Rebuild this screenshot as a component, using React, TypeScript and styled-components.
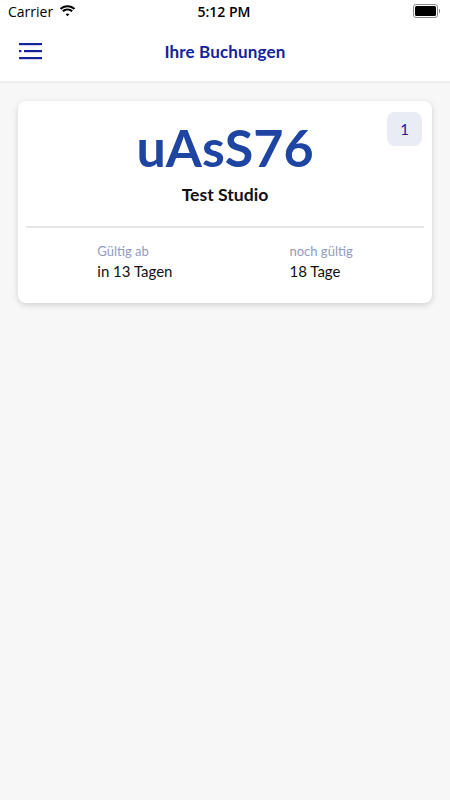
import styled, { createGlobalStyle } from 'styled-components';

const GlobalStyle = createGlobalStyle`
	html, body {
		margin: 0;
		padding: 0;
		background-color: #F7F7F7;
		font-family: Lato, "Open Sans", sans-serif;
	}
`

const StatusBar = () => {
	return (
		<StatusRow>
			<Carrier>
				Carrier
				<svg width="17" height="12" viewBox="0 0 17 12">
					<path d="M8.5 2.2c2.4 0 4.6.9 6.3 2.5l1.4-1.5C14.2 1.3 11.5.2 8.5.2S2.8 1.3.8 3.2l1.4 1.5C3.9 3.1 6.1 2.2 8.5 2.2z" fill="#000" />
					<path d="M8.5 5.4c1.5 0 2.9.6 4 1.6l1.4-1.5C12.5 4.2 10.6 3.4 8.5 3.4S4.5 4.2 3.1 5.5L4.5 7c1.1-1 2.5-1.6 4-1.6z" fill="#000" />
					<path d="M8.5 8.6c.7 0 1.3.3 1.8.7L8.5 11.3 6.7 9.3c.5-.4 1.1-.7 1.8-.7z" fill="#000" />
				</svg>
			</Carrier>
			<Time>5:12 PM</Time>
			<Battery>
				<BatteryBody>
					<BatteryLevel />
				</BatteryBody>
				<BatteryTip />
			</Battery>
		</StatusRow>
	)
}

const MenuIcon = () => (
	<svg width="24" height="18" viewBox="0 0 24 18">
		<rect x="0" y="0" width="23" height="2.2" fill="#12239B" />
		<rect x="0" y="7" width="2.4" height="2.2" fill="#12239B" />
		<rect x="5" y="7" width="18" height="2.2" fill="#12239B" />
		<rect x="0" y="14" width="23" height="2.2" fill="#12239B" />
	</svg>
)

const App = () => {
	return (
		<Page>
			<GlobalStyle />
			<Header>
				<StatusBar />
				<NavBar>
					<MenuButton><MenuIcon /></MenuButton>
					<NavTitle>Ihre Buchungen</NavTitle>
				</NavBar>
			</Header>
			<Content>
				<BookingCard>
					<Badge>1</Badge>
					<Code>uAsS76</Code>
					<Studio>Test Studio</Studio>
					<Divider />
					<Meta>
						<MetaItem>
							<MetaLabel>Gültig ab</MetaLabel>
							<MetaValue>in 13 Tagen</MetaValue>
						</MetaItem>
						<MetaItem>
							<MetaLabel>noch gültig</MetaLabel>
							<MetaValue>18 Tage</MetaValue>
						</MetaItem>
					</Meta>
				</BookingCard>
			</Content>
		</Page>
	)
}

const Page = styled.div`
	min-height: 800px;
	background-color: #F7F7F7;
`

const Header = styled.div`
	background-color: #FFF;
	border-bottom: 2px solid #EDEDED;
`

const StatusRow = styled.div`
	height: 22px;
	display: flex;
	align-items: center;
	justify-content: space-between;
	padding: 0 10px 0 8px;
	font-family: "Open Sans", "Liberation Sans", sans-serif;
	font-size: 14px;
	color: #000;
`

const Carrier = styled.div`
	display: flex;
	align-items: center;
	gap: 6px;
	width: 90px;
`

const Time = styled.div`
	font-weight: 600;
`

const Battery = styled.div`
	width: 90px;
	display: flex;
	justify-content: flex-end;
	align-items: center;
	gap: 1px;
`

const BatteryBody = styled.div`
	width: 21px;
	height: 10px;
	border: 1px solid #8A8A8A;
	border-radius: 3px;
	padding: 1px;
`

const BatteryLevel = styled.div`
	width: 100%;
	height: 100%;
	background-color: #000;
	border-radius: 1.5px;
`

const BatteryTip = styled.div`
	width: 1.5px;
	height: 4px;
	background-color: #8A8A8A;
	border-radius: 0 1px 1px 0;
`

const NavBar = styled.div`
	height: 59px;
	display: flex;
	align-items: center;
	justify-content: center;
	position: relative;
`

const MenuButton = styled.div`
	position: absolute;
	left: 19px;
	top: 21px;
	display: flex;
`

const NavTitle = styled.div`
	color: #12239B;
	font-size: 17px;
	font-weight: 700;
	letter-spacing: 0.15px;
`

const Content = styled.div`
	padding: 18px 18px;
`

const BookingCard = styled.div`
	position: relative;
	background-color: #FFF;
	border-radius: 8px;
	box-shadow: rgba(0, 0, 0, 0.16) 0px 2px 6px 0px;
	padding: 15px 8px 23px;
	display: flex;
	flex-direction: column;
	align-items: center;
`

const Badge = styled.div`
	position: absolute;
	top: 11px;
	right: 10px;
	width: 35px;
	height: 34px;
	border-radius: 8px;
	background-color: #E9ECF5;
	color: #12239B;
	font-size: 15px;
	display: flex;
	align-items: center;
	justify-content: center;
`

const Code = styled.div`
	color: #1E45A1;
	font-size: 52px;
	font-weight: 700;
	line-height: 1.2;
`

const Studio = styled.div`
	margin-top: 6px;
	font-size: 17.6px;
	font-weight: 700;
	line-height: 22px;
	color: #111;
`

const Divider = styled.div`
	align-self: stretch;
	height: 2px;
	background-color: #E6E6E6;
	margin: 20px 0 15px;
`

const Meta = styled.div`
	display: flex;
	justify-content: center;
	gap: 117px;
	align-self: stretch;
`

const MetaItem = styled.div`
	display: flex;
	flex-direction: column;
	gap: 3px;
`

const MetaLabel = styled.div`
	font-size: 13px;
	line-height: 16px;
	color: #8F9BC2;
`

const MetaValue = styled.div`
	font-size: 15px;
	line-height: 18px;
	color: #111;
`

export default App
